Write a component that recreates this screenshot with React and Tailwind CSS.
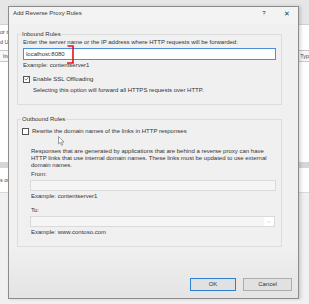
import React from 'react'
import { ChevronDown, Check } from 'lucide-react'

const font = { fontFamily: '"Liberation Sans", Arial, sans-serif' }

const Checkbox = ({ checked }) => (
  <span className="flex h-[7px] w-[7px] shrink-0 items-center justify-center border border-[#555] bg-white">
    {checked && <Check size={6} strokeWidth={3} className="text-[#333]" />}
  </span>
)

// background window that the dialog sits on top of
const BackgroundWindow = () => (
  <div className="flex h-[304px] w-[309px] flex-col bg-[#f4f4f4] text-[5.5px] leading-[7px] text-[#444]">
    <div className="h-[25px] border-b border-[#d0d0d0] bg-[#e6e6e6]" />
    <div className="flex h-[25px] flex-col justify-center gap-[3px] bg-white">
      <div className="whitespace-nowrap">or t</div>
      <div className="whitespace-nowrap">d U</div>
    </div>
    <div className="flex h-[12px] items-center justify-between border-y border-[#c8c8c8] bg-[#f7f7f7]">
      <span className="ml-[3px]">Ing</span>
      <span>Typ</span>
    </div>
    <div className="h-[100px] bg-white" />
    <div className="h-[6px] bg-[#d6d6d6]" />
    <div className="flex h-[24px] items-center bg-white">
      <span>s or</span>
    </div>
    <div className="flex-1 border-t border-[#d8d8d8] bg-[#f0f0f0]" />
  </div>
)

const Cursor = () => (
  <svg width="7" height="10" viewBox="0 0 7 10" className="absolute left-[58px] top-[136px]">
    <path d="M0.5 0.5 L0.5 8 L2.3 6.4 L3.6 9.3 L4.7 8.8 L3.5 6 L6 6 Z" fill="#fff" stroke="#777" strokeWidth="0.7" />
  </svg>
)

const Bracket = () => (
  <svg width="9" height="20" viewBox="0 0 9 20" className="absolute left-[66px] top-[45px]">
    <path d="M1.5 1 L7 1 L7 18 L1 18" fill="none" stroke="#e3121c" strokeWidth="1.6" />
  </svg>
)

const App = () => {
  return (
    <div className="relative h-[304px] w-[309px] overflow-hidden" style={font}>
      <BackgroundWindow />

      {/* dialog */}
      <div className="absolute left-[8px] top-[6px] flex h-[293px] w-[291px] flex-col border border-[#8c8c8c] bg-[#f0f0f0] text-[6px] leading-[7px] text-[#333] shadow-[2px_0_3px_rgba(0,0,0,0.15)]">
        <div className="flex h-[17px] items-start bg-[#f3f3f3] pt-[2.5px]">
          <span className="ml-[4px] text-[6px]">Add Reverse Proxy Rules</span>
          <span className="ml-auto w-[8px] text-center text-[6px]">?</span>
          <span className="ml-[15px] mr-[7px] w-[8px] text-center text-[7px]">✕</span>
        </div>

        {/* Inbound */}
        <fieldset className="ml-[8px] mt-[6.5px] w-[265px] border border-[#dcdcdc] px-[5px] pb-[10.5px]">
          <legend className="-ml-[2px] px-[1px]">Inbound Rules</legend>
          <div className="mt-[1px] whitespace-nowrap">
            Enter the server name or the IP address where HTTP requests will be forwarded:
          </div>
          <div className="mt-[2.5px] flex h-[12px] w-[253px] items-center border border-[#4a90d9] bg-white pl-[2px]">
            localhost:8080
          </div>
          <div className="mt-[1.5px]">Example: contentserver1</div>
          <div className="mt-[7px] flex items-center gap-[3px]">
            <Checkbox checked />
            <span>Enable SSL Offloading</span>
          </div>
          <div className="ml-[10px] mt-[4px] whitespace-nowrap">
            Selecting this option will forward all HTTPS requests over HTTP.
          </div>
        </fieldset>

        {/* Outbound */}
        <fieldset className="ml-[8px] mt-[10.5px] w-[265px] border border-[#dcdcdc] px-[4px] pb-[10.5px]">
          <legend className="-ml-[1px] px-[1px]">Outbound Rules</legend>
          <div className="mt-[5px] flex items-center gap-[3px]">
            <Checkbox />
            <span>Rewrite the domain names of the links in HTTP responses</span>
          </div>
          <div className="ml-[9px] mt-[13px] w-[246px]">
            Responses that are generated by applications that are behind a reverse proxy can have
            HTTP links that use internal domain names. These links must be updated to use external
            domain names.
          </div>
          <div className="ml-[9px] mt-[2px]">From:</div>
          <div className="ml-[8px] mt-[2.5px] h-[11px] w-[246px] border border-[#dadada] bg-[#f5f5f5]" />
          <div className="ml-[9px] mt-[2px]">Example: contentserver1</div>
          <div className="ml-[9px] mt-[6.5px]">To:</div>
          <div className="ml-[8px] mt-[2.5px] flex h-[11px] w-[245px] border border-[#dadada] bg-[#f5f5f5]">
            <span className="ml-auto flex w-[10px] items-center justify-center bg-white">
              <ChevronDown size={6} strokeWidth={1.5} className="text-[#aaa]" />
            </span>
          </div>
          <div className="ml-[9px] mt-[1.5px]">Example: www.contoso.com</div>
        </fieldset>

        {/* buttons */}
        <div className="mt-auto flex flex-1 items-end justify-end gap-[7px] bg-gradient-to-b from-[#f0f0f0] to-[#e4e4e4] pb-[7px] pr-[6px]">
          <button className="flex h-[13px] w-[46px] items-center justify-center border border-[#2f7fd1] bg-[#e1e1e1]">
            OK
          </button>
          <button className="flex h-[13px] w-[49px] items-center justify-center border border-[#adadad] bg-[#e1e1e1]">
            Cancel
          </button>
        </div>
      </div>

      <Bracket />
      <Cursor />
    </div>
  )
}

export default App
